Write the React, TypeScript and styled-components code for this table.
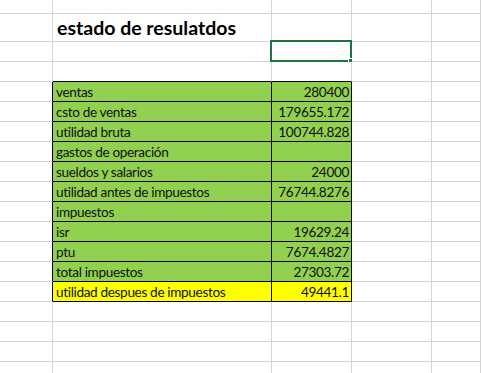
import styled, { createGlobalStyle } from 'styled-components';

const GlobalStyle = createGlobalStyle`
  html, body {
    margin: 0;
    padding: 0;
    background: #ffffff;
    overflow: hidden;
  }
  body {
    font-family: Lato, Carlito, "Liberation Sans", sans-serif;
  }
`;

type Row = { label: string; value: string; fill?: 'green' | 'yellow' };

const rows: Row[] = [
  { label: 'ventas', value: '280400' },
  { label: 'csto de ventas', value: '179655.172' },
  { label: 'utilidad bruta', value: '100744.828' },
  { label: 'gastos de operación', value: '' },
  { label: 'sueldos y salarios', value: '24000' },
  { label: 'utilidad antes de impuestos', value: '76744.8276' },
  { label: 'impuestos', value: '' },
  { label: 'isr', value: '19629.24' },
  { label: 'ptu', value: '7674.4827' },
  { label: 'total impuestos', value: '27303.72' },
  { label: 'utilidad despues de impuestos', value: '49441.1', fill: 'yellow' },
];

const GRID = '#d4d4d4';
const INK = '#000000';
const fills = { green: '#92d050', yellow: '#ffff00', none: '#ffffff' };

export default function App() {
  return (
    <>
      <GlobalStyle />
      <Sheet>
        {/* row 1 (partial) */}
        <Cell $h={14} />
        <Cell $h={14} />
        <Cell $h={14} />
        <Cell $h={14} />
        <Cell $h={14} />

        {/* title row */}
        <Cell $h={28} />
        <Cell $h={28}>
          <Title>estado de resulatdos</Title>
        </Cell>
        <Cell $h={28} />
        <Cell $h={28} />
        <Cell $h={28} />

        {/* selected empty row */}
        <Cell />
        <Cell />
        <Cell>
          <Selection>
            <Handle />
          </Selection>
        </Cell>
        <Cell />
        <Cell />

        {/* row above the table */}
        <Cell />
        <Cell $bottom={INK} />
        <Cell $bottom={INK} />
        <Cell />
        <Cell />

        {rows.map((r) => (
          <TableRow key={r.label} row={r} />
        ))}

        {[0, 1, 2, 3].map((i) => (
          <EmptyRow key={i} />
        ))}
      </Sheet>
    </>
  );
}

const TableRow = ({ row }: { row: Row }) => {
  const fill = row.fill ?? 'green';
  return (
    <>
      <Cell $right={INK} />
      <Cell $right={INK} $bottom={INK} $fill={fill}>
        <Text>{row.label}</Text>
      </Cell>
      <Cell $right={INK} $bottom={INK} $fill={fill} $align="right">
        <Text>{row.value}</Text>
      </Cell>
      <Cell />
      <Cell />
    </>
  );
};

const EmptyRow = () => (
  <>
    <Cell />
    <Cell />
    <Cell />
    <Cell />
    <Cell />
  </>
);

const Sheet = styled('div')`
  display: grid;
  grid-template-columns: 53px 219px 80px 80px 1fr;
  width: 481px;
  height: 373px;
  overflow: hidden;
`;

const Cell = styled('div')<{
  $h?: number;
  $right?: string;
  $bottom?: string;
  $fill?: 'green' | 'yellow';
  $align?: 'left' | 'right';
}>`
  position: relative;
  box-sizing: border-box;
  height: ${({ $h }) => $h ?? 20}px;
  border-right: 1px solid ${({ $right }) => $right ?? GRID};
  border-bottom: 1px solid ${({ $bottom }) => $bottom ?? GRID};
  background: ${({ $fill }) => fills[$fill ?? 'none']};
  display: flex;
  align-items: flex-end;
  justify-content: ${({ $align }) => ($align === 'right' ? 'flex-end' : 'flex-start')};
  padding: 0 2px 0 3px;
  white-space: nowrap;
`;

const Text = styled('span')`
  font-size: 13.6px;
  letter-spacing: -0.35px;
  line-height: 18px;
  color: #111111;
`;

const Title = styled('span')`
  font-size: 19.5px;
  font-weight: 700;
  line-height: 26px;
  padding-left: 1px;
  color: #000000;
`;

const Selection = styled('div')`
  position: absolute;
  top: -2px;
  left: -2px;
  right: -1px;
  bottom: -1px;
  border: 2px solid #217346;
  pointer-events: none;
`;

const Handle = styled('div')`
  position: absolute;
  right: -5px;
  bottom: -5px;
  width: 6px;
  height: 6px;
  background: #217346;
  border: 1px solid #ffffff;
  border-right: none;
  border-bottom: none;
`;
